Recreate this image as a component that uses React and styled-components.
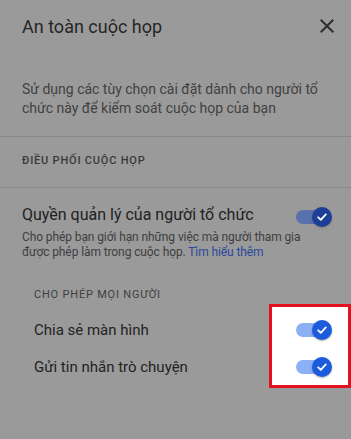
import styled, { createGlobalStyle, css } from 'styled-components';

const GlobalStyle = createGlobalStyle`
	html, body {
		margin: 0;
		padding: 0;
		background: #9a9a9a;
	}
	body {
		font-family: Roboto, "Noto Sans", "Liberation Sans", sans-serif;
		-webkit-font-smoothing: antialiased;
	}
`

const Page = styled.div`
	width: 351px;
	min-height: 439px;
	background: #9a9a9a;
	overflow: hidden;
`

const Header = styled.div`
	display: flex;
	align-items: center;
	justify-content: space-between;
	height: 52px;
	padding: 0 12px 0 22px;
`

const Title = styled.h1`
	margin: 0;
	font-size: 18px;
	font-weight: 400;
	color: #262626;
`

const CloseButton = styled.button`
	display: flex;
	padding: 0;
	border: 0;
	background: none;
	color: #2e2e2e;
	cursor: pointer;
`

const Intro = styled.p`
	margin: 0;
	padding: 28px 26px 18px 22px;
	font-size: 14px;
	line-height: 19px;
	color: #414141;
	border-bottom: 1px solid #878787;
`

const SectionLabel = styled.div`
	font-size: 11px;
	line-height: 16px;
	font-weight: 500;
	letter-spacing: 0.8px;
	text-transform: uppercase;
	color: #393939;
	${props => props.divided ? css`
		padding: 16px 22px 18px;
		border-bottom: 1px solid #878787;
	` : css`
		padding: 27px 34px 1px;
		font-weight: 400;
		color: #3f3f3f;
	`}
`

const SettingRow = styled.div`
	display: flex;
	align-items: flex-start;
	justify-content: space-between;
	padding: 17px 19px 0 22px;
`

const SettingText = styled.div`
	flex: 1;
	min-width: 0;
`

const SettingName = styled.div`
	font-size: 16px;
	line-height: 20px;
	color: #222;
`

const SettingHelp = styled.div`
	margin-top: 5px;
	width: 286px;
	font-size: 12px;
	line-height: 15px;
	letter-spacing: -0.1px;
	color: #3e3e3e;

	a {
		color: #2b479c;
		text-decoration: none;
	}
`

const Group = styled.div`
	display: flex;
	justify-content: space-between;
`

const Labels = styled.div`
	display: flex;
	flex-direction: column;
	gap: 17px;
	padding: 16px 0 0 34px;
`

const Label = styled.div`
	font-size: 15px;
	line-height: 20px;
	color: #222;
`

const Spotlight = styled.div`
	display: flex;
	flex-direction: column;
	gap: 17px;
	width: 82px;
	box-sizing: border-box;
	padding: 13px 16px 8px 24px;
	background: #fff;
	border: 3px solid #e3101e;
`

const Track = styled.span`
	position: relative;
	display: block;
	width: 36px;
	height: 20px;
	flex-shrink: 0;
	margin-top: ${props => props.offset || 0}px;

	&::before {
		content: '';
		position: absolute;
		left: 0;
		top: 3px;
		width: 30px;
		height: 14px;
		border-radius: 7px;
		background: ${props => props.dim ? '#5a72ab' : '#8cb0f6'};
	}
`

const Knob = styled.span`
	position: absolute;
	right: 0;
	top: 0;
	width: 20px;
	height: 20px;
	border-radius: 50%;
	display: flex;
	align-items: center;
	justify-content: center;
	background: ${props => props.dim ? '#1d3f98' : '#1b5bdc'};
	box-shadow: 0 1px 2px rgba(0, 0, 0, ${props => props.dim ? 0.2 : 0.3});
`

function Toggle({ dim, offset }) {
	return (
		<Track dim={dim} offset={offset}>
			<Knob dim={dim}>
				<svg width="12" height="12" viewBox="0 0 12 12">
					<path d="M2.2 6.3 L4.8 8.8 L9.8 3.4" fill="none" stroke="#fff" strokeWidth="1.8" strokeLinecap="round" strokeLinejoin="round" />
				</svg>
			</Knob>
		</Track>
	)
}

export default function App() {
	return (
		<Page>
			<GlobalStyle />
			<Header>
				<Title>An toàn cuộc họp</Title>
				<CloseButton aria-label="Đóng">
					<svg width="24" height="24" viewBox="0 0 24 24">
						<path d="M19 6.41 17.59 5 12 10.59 6.41 5 5 6.41 10.59 12 5 17.59 6.41 19 12 13.41 17.59 19 19 17.59 13.41 12z" fill="currentColor" />
					</svg>
				</CloseButton>
			</Header>
			<Intro>Sử dụng các tùy chọn cài đặt dành cho người tổ chức này để kiểm soát cuộc họp của bạn</Intro>
			<SectionLabel divided>Điều phối cuộc họp</SectionLabel>
			<SettingRow>
				<SettingText>
					<SettingName>Quyền quản lý của người tổ chức</SettingName>
					<SettingHelp>
						Cho phép bạn giới hạn những việc mà người tham gia được phép làm trong cuộc họp. <a href="#">Tìm hiểu thêm</a>
					</SettingHelp>
				</SettingText>
				<Toggle dim offset={2} />
			</SettingRow>
			<SectionLabel>Cho phép mọi người</SectionLabel>
			<Group>
				<Labels>
					<Label>Chia sẻ màn hình</Label>
					<Label>Gửi tin nhắn trò chuyện</Label>
				</Labels>
				<Spotlight>
					<Toggle />
					<Toggle />
				</Spotlight>
			</Group>
		</Page>
	)
}
